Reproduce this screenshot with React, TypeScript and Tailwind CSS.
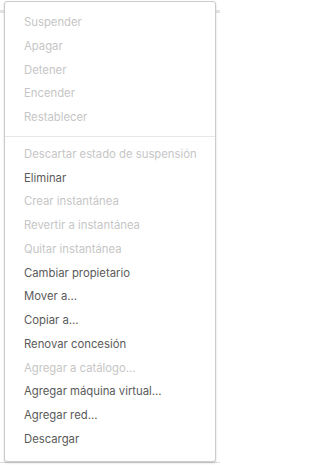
const items: { label: string; enabled: boolean }[][] = [
  [
    { label: 'Suspender', enabled: false },
    { label: 'Apagar', enabled: false },
    { label: 'Detener', enabled: false },
    { label: 'Encender', enabled: false },
    { label: 'Restablecer', enabled: false },
  ],
  [
    { label: 'Descartar estado de suspensión', enabled: false },
    { label: 'Eliminar', enabled: true },
    { label: 'Crear instantánea', enabled: false },
    { label: 'Revertir a instantánea', enabled: false },
    { label: 'Quitar instantánea', enabled: false },
    { label: 'Cambiar propietario', enabled: true },
    { label: 'Mover a...', enabled: true },
    { label: 'Copiar a...', enabled: true },
    { label: 'Renovar concesión', enabled: true },
    { label: 'Agregar a catálogo...', enabled: false },
    { label: 'Agregar máquina virtual...', enabled: true },
    { label: 'Agregar red...', enabled: true },
    { label: 'Descargar', enabled: true },
  ],
];

export default function App() {
  return (
    <div className="relative w-[220px] h-[465px] bg-white overflow-hidden font-['Inter',sans-serif]">
      {/* page behind the menu */}
      <div className="h-[10px]" />
      <div className="h-[3px] bg-[#e3e3e3]" />
      <div className="h-[449px]" />
      <div className="h-[1px] bg-[#dcdcdc]" />

      {/* dropdown */}
      <div className="absolute left-[4px] top-[1px] w-[212px] rounded-[3px] border border-[#cccccc] bg-white py-[9px] shadow-[0_1px_2px_rgba(115,115,115,0.35)]">
        {items.map((group, gi) => (
          <div key={gi}>
            {gi > 0 && <div className="my-[6px] h-px bg-[#e8e8e8]" />}
            {group.map((it) => (
              <button
                key={it.label}
                disabled={!it.enabled}
                className={`block w-full h-[23.75px] px-[19px] text-left text-[11.3px] leading-[23.75px] whitespace-nowrap ${
                  it.enabled ? 'text-[#5a5a5a]' : 'text-[#c6c6c6]'
                }`}
              >
                {it.label}
              </button>
            ))}
          </div>
        ))}
      </div>
    </div>
  );
}
